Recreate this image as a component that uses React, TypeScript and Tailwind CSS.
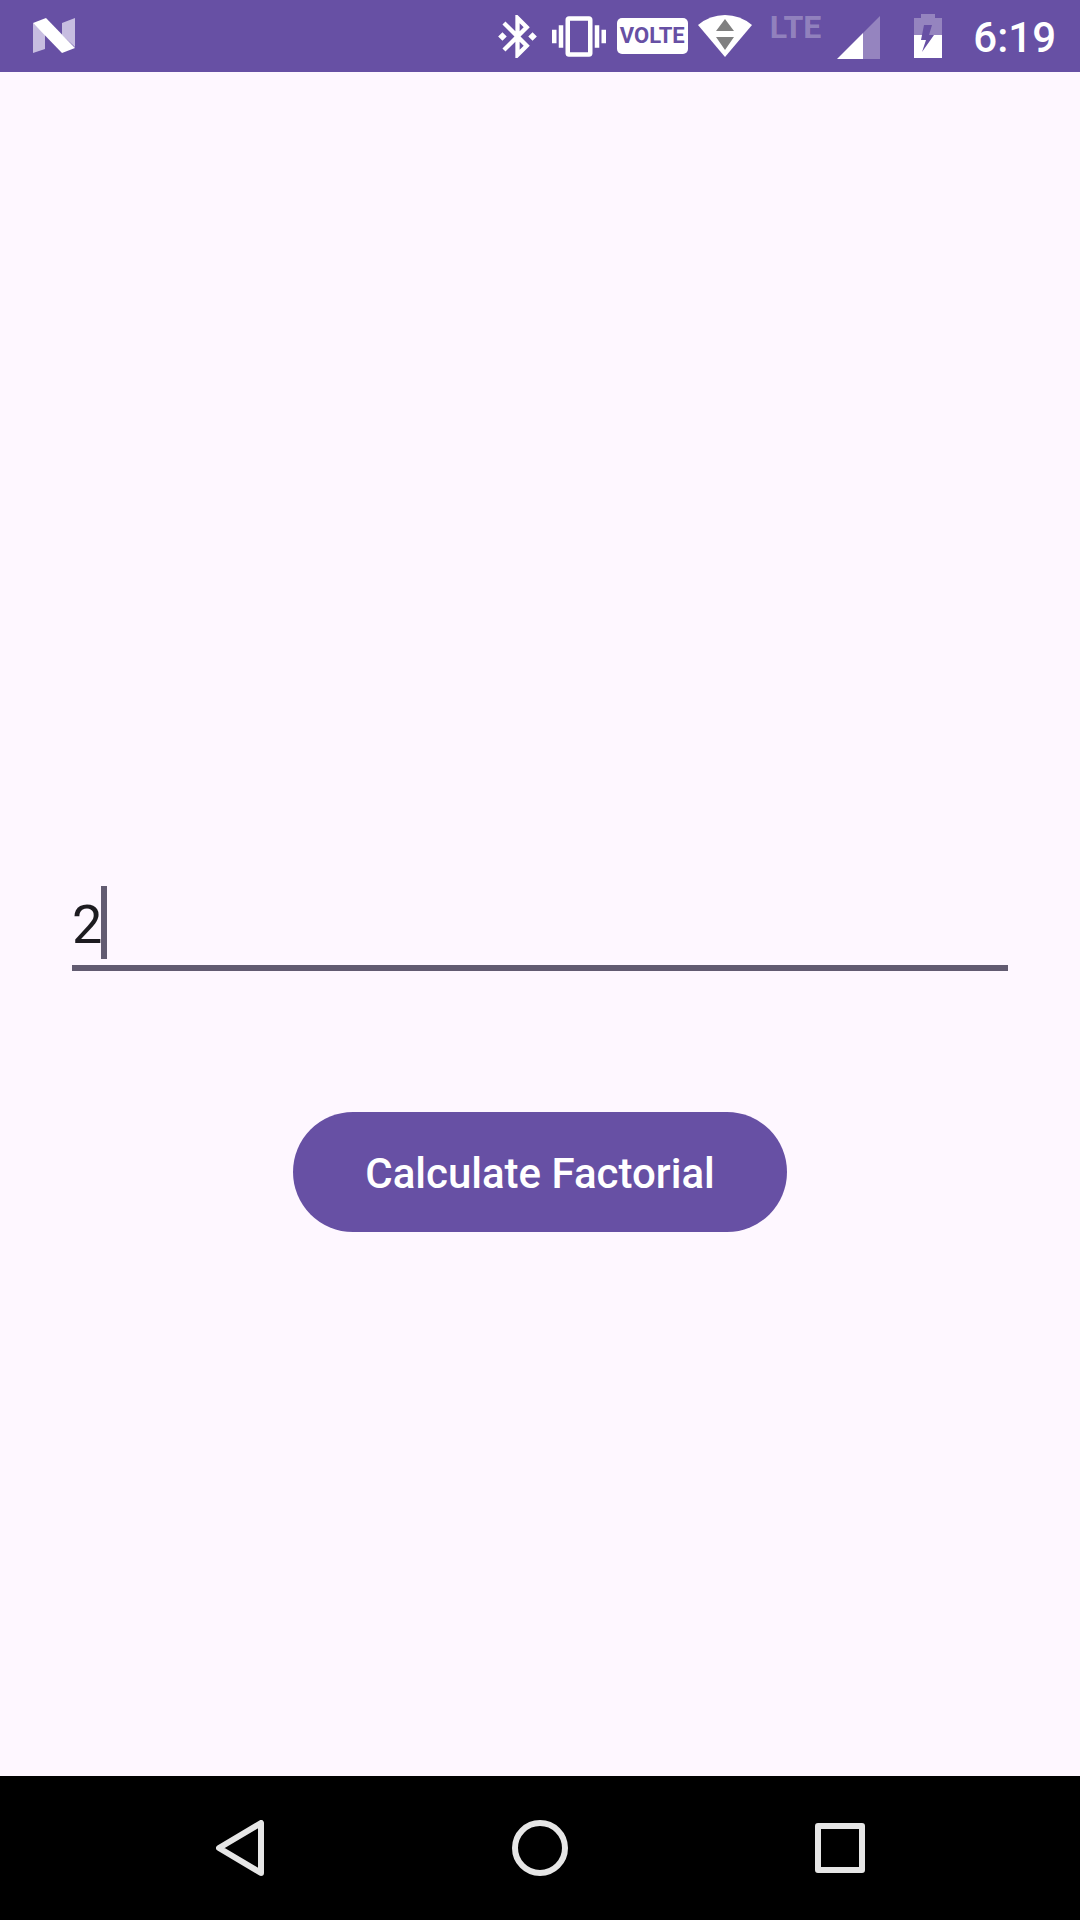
import { useState } from "react";

function NougatIcon() {
  return (
    <svg viewBox="0 0 42 36" className="h-[36px] w-[42px]" aria-hidden="true">
      <path d="M0 5l12 11v15L0 35z M42 0v29L29 17V5z" fill="#c7bde0" />
      <path d="M0 5L13 0l29 30-13 5z" fill="#fff" />
    </svg>
  );
}

function BluetoothIcon() {
  return (
    <svg viewBox="3 2 18 20" className="h-[43px] w-[39px]" fill="#fff" aria-hidden="true">
      <path d="M7 12l-2-2-2 2 2 2 2-2zm10.71-4.29L12 2h-1v7.59L6.41 5 5 6.41 10.59 12 5 17.59 6.41 19 11 14.41V22h1l5.71-5.71-4.3-4.29 4.3-4.29zM13 5.83l1.88 1.88L13 9.59V5.83zm1.88 10.46L13 18.17v-3.76l1.88 1.88zM19 10l-2 2 2 2 2-2-2-2z" />
    </svg>
  );
}

function VibrateIcon() {
  return (
    <svg viewBox="0 3 24 18" className="ml-[15px] h-[41px] w-[54px]" fill="#fff" aria-hidden="true">
      <path d="M0 15h2V9H0v6zm3 2h2V7H3v10zm19-8v6h2V9h-2zm-3 8h2V7h-2v10zM16.5 3h-9C6.67 3 6 3.67 6 4.5v15c0 .83.67 1.5 1.5 1.5h9c.83 0 1.5-.67 1.5-1.5v-15c0-.83-.67-1.5-1.5-1.5zM16 19H8V5h8v14z" />
    </svg>
  );
}

function WifiIcon() {
  return (
    <svg viewBox="0 0 54 43" className="ml-[10px] h-[43px] w-[54px]" aria-hidden="true">
      <path d="M0 10Q12 0 27 0t27 10L27 42z" fill="#fff" />
      <path d="M27 4l9 12H18zM18 22h18l-9 13z" fill="#808080" />
    </svg>
  );
}

function SignalIcon() {
  return (
    <svg viewBox="0 0 43 43" className="mt-[2px] ml-[16px] h-[43px] w-[43px]" aria-hidden="true">
      <path d="M43 0v43H26V17z" fill="#fff" fillOpacity="0.3" />
      <path d="M26 17v26H0z" fill="#fff" />
    </svg>
  );
}

function BatteryIcon() {
  return (
    <svg viewBox="0 0 28 44" className="ml-[34px] h-[44px] w-[28px]" aria-hidden="true">
      <path d="M7 0h14v4h7v17H0V4h7z" fill="#fff" fillOpacity="0.3" />
      <path d="M0 21h28v23H0z" fill="#fff" />
      <path d="M10 11h8l-3 10h5L8 38l4-12H7z" fill="#6750a4" />
    </svg>
  );
}

function StatusBar() {
  return (
    <header className="flex h-[72px] shrink-0 items-center justify-between bg-[#6750a4] pr-6 pl-[33px] text-white">
      <NougatIcon />
      <div className="flex h-full items-center">
        <BluetoothIcon />
        <VibrateIcon />
        <span className="ml-[11px] flex h-[36px] w-[71px] items-center justify-center rounded-[5px] bg-white text-[22px] leading-[36px] font-bold text-[#6750a4]">
          VOLTE
        </span>
        <WifiIcon />
        <span className="ml-[18px] self-start pt-[11px] text-[32px] leading-[32px] font-bold text-white/30">LTE</span>
        <SignalIcon />
        <BatteryIcon />
        <time className="ml-[31px] pt-[3px] text-[42px] leading-[48px] font-medium">6:19</time>
      </div>
    </header>
  );
}

function NumberField({ value, onChange }: { value: string; onChange: (value: string) => void }) {
  return (
    <div className="mx-[72px] border-b-[6px] border-[#625b71] pt-[9px] pb-[6px]">
      <div className="relative text-[54px]">
        <input
          aria-label="Number"
          type="text"
          inputMode="numeric"
          value={value}
          onChange={(event) => onChange(event.target.value)}
          className="block h-[73px] w-full bg-transparent pt-[4px] leading-[68px] text-[#1d1b20] caret-transparent outline-none"
        />
        <span
          aria-hidden="true"
          className="pointer-events-none absolute top-0 h-[73px] w-[6px] -translate-x-px bg-[#625b71]"
          style={{ left: `${value.length}ch` }}
        />
      </div>
    </div>
  );
}

function NavigationBar() {
  const button = "flex items-center justify-center";
  return (
    <nav className="h-[144px] shrink-0 bg-black">
      <div className="mx-auto grid h-full w-5/6 grid-cols-3">
        <button type="button" aria-label="Back" className={button}>
          <svg viewBox="0 0 48 56" className="h-[56px] w-[48px]" fill="none" stroke="#e6e6e6" strokeWidth="6" strokeLinejoin="round">
            <path d="M45 3v50L3 28z" />
          </svg>
        </button>
        <button type="button" aria-label="Home" className={button}>
          <svg viewBox="0 0 56 56" className="h-[56px] w-[56px]" fill="none" stroke="#e6e6e6" strokeWidth="6">
            <circle cx="28" cy="28" r="25" />
          </svg>
        </button>
        <button type="button" aria-label="Recent apps" className={button}>
          <svg viewBox="0 0 50 50" className="h-[50px] w-[50px]" fill="none" stroke="#e6e6e6" strokeWidth="6" strokeLinejoin="round">
            <path d="M3 3h44v44H3z" />
          </svg>
        </button>
      </div>
    </nav>
  );
}

export default function App() {
  const [value, setValue] = useState("2");
  return (
    <div className="flex min-h-screen flex-col bg-[#fef7ff] font-['Roboto',sans-serif]">
      <StatusBar />
      <main className="grid grow grid-rows-[1fr_auto_1fr]">
        <div />
        <NumberField value={value} onChange={setValue} />
        <div className="flex items-start justify-center pt-[141px]">
          <button
            type="button"
            className="h-[120px] rounded-full bg-[#6750a4] px-[72px] pt-[3px] text-[42px] leading-[48px] font-medium text-white"
          >
            Calculate Factorial
          </button>
        </div>
      </main>
      <NavigationBar />
    </div>
  );
}
